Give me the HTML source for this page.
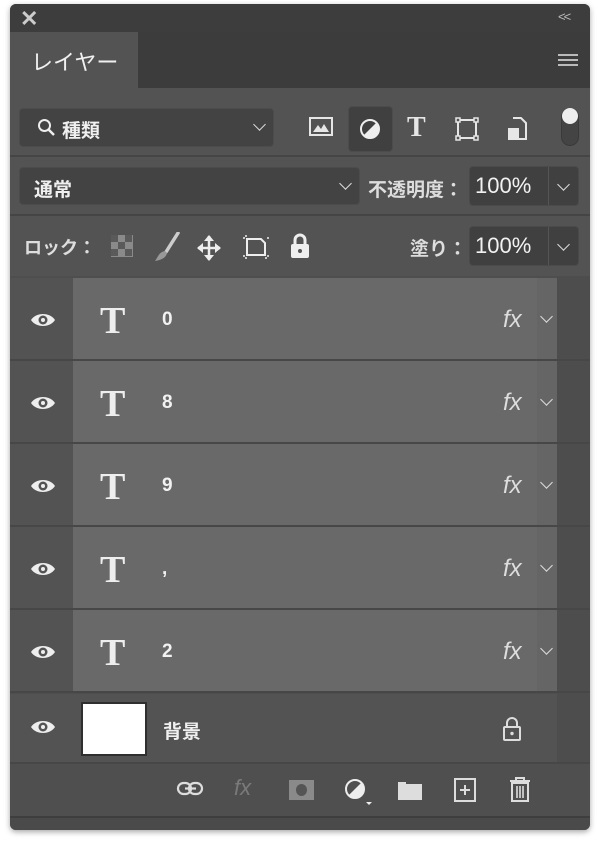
<!DOCTYPE html>
<html><head><meta charset="utf-8"><style>
*{margin:0;padding:0;box-sizing:border-box}
body{width:600px;height:845px;background:#fff;position:relative;overflow:hidden;font-family:"Liberation Sans","Noto Sans CJK JP",sans-serif;color:#e6e6e6}
.a{position:absolute}
.panel{left:10px;top:4px;width:580px;height:826px;background:#535353;border-radius:6px;overflow:hidden;box-shadow:0 2px 6px rgba(0,0,0,.35)}
.box{background:#434343;border:1px solid #4c4c4c;border-radius:4px}
.chev{width:9px;height:9px;border-right:1.8px solid #ddd;border-bottom:1.8px solid #ddd;transform:rotate(45deg)}
.row{left:0;width:580px;height:83px;border-bottom:2px solid #474747}
.row .l{position:absolute;left:0;top:0;width:63px;height:81px;background:#535353}
.row .c{position:absolute;left:63px;top:0;width:464px;height:81px;background:#696969}
.row .r{position:absolute;left:527px;top:0;width:20px;height:81px;background:#656565}
.txt{font-size:19px;font-weight:bold}
.T{font-family:'Liberation Serif',serif;font-size:38px;color:#eee;font-weight:bold}
</style></head><body>
<div class="a panel">
 <div class="a" style="left:0;top:0;width:580px;height:28px;background:#3d3d3d"></div>
 <div class="a" style="left:10px;top:2px;font-size:22px;font-weight:bold;color:#ccc">✕</div>
 <div class="a" style="left:548px;top:5px;font-size:13px;color:#bbb;letter-spacing:-2px">&lt;&lt;</div>
 <div class="a" style="left:0;top:28px;width:580px;height:56px;background:#3c3c3c"></div>
 <div class="a" style="left:0;top:28px;width:128px;height:57px;background:#535353"></div>
 <div class="a" style="left:21px;top:41px;font-size:22px;color:#f0f0f0">レイヤー</div>
 <div class="a" style="left:548px;top:50px;width:20px;height:12px;border-top:2px solid #bbb;border-bottom:2px solid #bbb"></div>
 <div class="a" style="left:548px;top:55px;width:20px;height:2px;background:#bbb"></div>
 <div class="a box" style="left:9px;top:104px;width:255px;height:39px"></div>
 <svg class="a" style="left:27px;top:114px" width="20" height="20"><circle cx="7.5" cy="7.5" r="5.5" fill="none" stroke="#eee" stroke-width="2"/><line x1="11.5" y1="11.5" x2="17" y2="17" stroke="#eee" stroke-width="2.5"/></svg>
 <div class="a txt" style="left:52px;top:112px;color:#f0f0f0">種類</div>
 <div class="a chev" style="left:245px;top:116px"></div>
 <svg class="a" style="left:299px;top:113px" width="24" height="20"><rect x="1" y="1" width="22" height="17" fill="none" stroke="#e6e6e6" stroke-width="2"/><path d="M4 15 L9 8 L12 12 L15 7 L20 15Z" fill="#e6e6e6"/></svg>
 <div class="a" style="left:338px;top:102px;width:45px;height:46px;background:#404040;border:1px solid #4c4c4c;border-radius:4px"></div>
 <svg class="a" style="left:349px;top:114px" width="22" height="22"><circle cx="11" cy="11" r="9" fill="none" stroke="#eee" stroke-width="2"/><path d="M17.4 4.6 A9 9 0 0 1 4.6 17.4Z" fill="#eee"/></svg>
 <div class="a" style="left:397px;top:108px;font-family:'Liberation Serif',serif;font-size:28px;font-weight:bold;color:#e6e6e6">T</div>
 <svg class="a" style="left:445px;top:113px" width="24" height="24"><rect x="3" y="3" width="18" height="18" fill="none" stroke="#e6e6e6" stroke-width="2"/><g fill="#535353" stroke="#e6e6e6" stroke-width="1.5"><rect x="1" y="1" width="4" height="4"/><rect x="19" y="1" width="4" height="4"/><rect x="1" y="19" width="4" height="4"/><rect x="19" y="19" width="4" height="4"/></g></svg>
 <svg class="a" style="left:496px;top:113px" width="22" height="24"><path d="M7 1 H15 L20 6 V22 H12" fill="none" stroke="#e6e6e6" stroke-width="2"/><rect x="2" y="11" width="11" height="12" fill="#e6e6e6"/></svg>
 <div class="a" style="left:551px;top:104px;width:18px;height:38px;border-radius:9px;background:#444;border:1px solid #3a3a3a"></div>
 <div class="a" style="left:552px;top:104px;width:16px;height:16px;border-radius:50%;background:#eee"></div>
 <div class="a" style="left:0;top:151px;width:580px;height:2px;background:#454545"></div>
 <div class="a box" style="left:9px;top:163px;width:341px;height:38px"></div>
 <div class="a txt" style="left:24px;top:171px;color:#f0f0f0">通常</div>
 <div class="a chev" style="left:331px;top:175px"></div>
 <div class="a txt" style="left:358px;top:171px;color:#ddd">不透明度：</div>
 <div class="a" style="left:459px;top:162px;width:110px;height:40px;background:#404040;border:1px solid #4a4a4a;border-radius:4px"></div>
 <div class="a" style="left:538px;top:163px;width:1px;height:38px;background:#555"></div>
 <div class="a" style="left:465px;top:169px;font-size:22px;color:#f2f2f2">100%</div>
 <div class="a chev" style="left:549px;top:176px"></div>
 <div class="a" style="left:0;top:210px;width:580px;height:2px;background:#454545"></div>
 <div class="a txt" style="left:14px;top:230px;font-size:18px;color:#ddd">ロック：</div>
 <svg class="a" style="left:101px;top:231px" width="22" height="22"><rect width="22" height="22" fill="#8a8a8a"/><g fill="#5a5a5a"><rect x="0" y="0" width="7" height="7"/><rect x="14" y="0" width="7" height="7"/><rect x="7" y="7" width="7" height="7"/><rect x="0" y="14" width="7" height="7"/><rect x="14" y="14" width="7" height="7"/></g></svg>
 <svg class="a" style="left:144px;top:228px" width="26" height="30"><path d="M24 1 L12 20" stroke="#ccc" stroke-width="3.5" stroke-linecap="round"/><path d="M11 19 C5 20 4 25 1 29 C7 28 12 26 13 21Z" fill="#999"/></svg>
 <svg class="a" style="left:187px;top:231px" width="24" height="26"><path d="M12 1 V25 M1 13 H23" stroke="#eee" stroke-width="2.5"/><path d="M12 0 L7 6 H17Z M12 26 L7 20 H17Z M0 13 L6 8 V18Z M24 13 L18 8 V18Z" fill="#eee"/></svg>
 <svg class="a" style="left:232px;top:230px" width="28" height="26"><path d="M5 5 H19 L23 9 V21 H5Z" fill="none" stroke="#eee" stroke-width="2"/><path d="M1 4 H3 M25 4 H27 M1 22 H3 M25 22 H27 M4 1 V3 M4 23 V25 M24 23 V25" stroke="#eee" stroke-width="1.5"/></svg>
 <svg class="a" style="left:279px;top:228px" width="22" height="28"><path d="M6 12 V8 A5 5 0 0 1 16 8 V12" fill="none" stroke="#eee" stroke-width="3"/><rect x="2" y="12" width="18" height="14" rx="2" fill="#eee"/><circle cx="11" cy="19" r="2" fill="#535353"/></svg>
 <div class="a txt" style="left:400px;top:230px;color:#ddd">塗り：</div>
 <div class="a" style="left:459px;top:222px;width:110px;height:40px;background:#404040;border:1px solid #4a4a4a;border-radius:4px"></div>
 <div class="a" style="left:538px;top:223px;width:1px;height:38px;background:#555"></div>
 <div class="a" style="left:465px;top:229px;font-size:22px;color:#f2f2f2">100%</div>
 <div class="a chev" style="left:549px;top:236px"></div>
 <div class="a" style="left:0;top:272px;width:580px;height:486px;background:#4e4e4e"></div>
 <div class="a" style="left:547px;top:272px;width:33px;height:486px;background:#4d4d4d"></div>
 <div class="a" style="left:0;top:690px;width:547px;height:68px;background:#535353"></div>
 <svg class="a" style="left:20px;top:714px" width="26" height="18"><path d="M1 9 C6 1 20 1 25 9 C20 17 6 17 1 9Z" fill="#eee"/><circle cx="13" cy="9" r="4.5" fill="#535353"/><circle cx="13" cy="9" r="2" fill="#eee"/></svg>
 <div class="a" style="left:71px;top:698px;width:66px;height:54px;background:#fff;border:2px solid #2f2f2f"></div>
 <div class="a txt" style="left:153px;top:713px;color:#f0f0f0">背景</div>
 <svg class="a" style="left:492px;top:712px" width="20" height="26"><path d="M5 11 V7 A5 5 0 0 1 15 7 V11" fill="none" stroke="#ddd" stroke-width="2"/><rect x="2" y="11" width="16" height="13" rx="1" fill="none" stroke="#ddd" stroke-width="2"/><circle cx="10" cy="17.5" r="1.7" fill="#ddd"/></svg>
 <div class="a" style="left:0;top:758px;width:580px;height:54px;background:#4f4f4f;border-top:2px solid #474747"></div>
 <svg class="a" style="left:166px;top:775px" width="30" height="20"><rect x="2" y="4" width="13" height="11" rx="5.5" fill="none" stroke="#ddd" stroke-width="2.2"/><rect x="13" y="4" width="13" height="11" rx="5.5" fill="none" stroke="#ddd" stroke-width="2.2"/><line x1="9" y1="9.5" x2="20" y2="9.5" stroke="#ddd" stroke-width="2.2"/></svg>
 <div class="a" style="left:224px;top:771px;font-size:22px;font-style:italic;color:#7a7a7a">fx</div>
 <div class="a" style="left:279px;top:776px;width:25px;height:20px;background:#8a8a8a"></div>
 <div class="a" style="left:286px;top:780px;width:11px;height:12px;border-radius:50%;background:#555"></div>
 <svg class="a" style="left:334px;top:774px" width="30" height="30"><circle cx="11" cy="11" r="9" fill="none" stroke="#eee" stroke-width="2"/><path d="M17.4 4.6 A9 9 0 0 1 4.6 17.4Z" fill="#eee"/><path d="M22 24 H28 L25 27Z" fill="#eee"/></svg>
 <svg class="a" style="left:387px;top:775px" width="26" height="22"><path d="M1 3 H9 V5 H25 V21 H1Z" fill="#ddd"/></svg>
 <svg class="a" style="left:444px;top:774px" width="22" height="24"><rect x="1" y="1" width="20" height="22" fill="none" stroke="#ddd" stroke-width="2"/><path d="M11 7 V17 M6 12 H16" stroke="#ddd" stroke-width="2"/></svg>
 <svg class="a" style="left:499px;top:772px" width="22" height="26"><path d="M1 5 H21 M7 5 V2 H15 V5" fill="none" stroke="#ddd" stroke-width="2"/><path d="M3 7 H19 V25 H3Z" fill="none" stroke="#ddd" stroke-width="2"/><path d="M8 10 V22 M11 10 V22 M14 10 V22" stroke="#ddd" stroke-width="1.6"/></svg>
 <div class="a" style="left:0;top:812px;width:580px;height:14px;background:#4a4a4a;border-top:2px solid #3e3e3e"></div>
</div>
<div class="a" style="left:10px;top:278px;width:0;height:0">
 <div class="a row" style="top:0"><div class="l"></div><div class="c"></div><div class="r"></div></div>
 <div class="a row" style="top:83px"><div class="l"></div><div class="c"></div><div class="r"></div></div>
 <div class="a row" style="top:166px"><div class="l"></div><div class="c"></div><div class="r"></div></div>
 <div class="a row" style="top:249px"><div class="l"></div><div class="c"></div><div class="r"></div></div>
 <div class="a row" style="top:332px"><div class="l"></div><div class="c"></div><div class="r"></div></div>
</div>
<div class="a" style="left:0;top:0">
 <div class="a" style="left:30px;top:311px"><svg width="26" height="18"><path d="M1 9 C6 1 20 1 25 9 C20 17 6 17 1 9Z" fill="#eee"/><circle cx="13" cy="9" r="4.5" fill="#535353"/><circle cx="13" cy="9" r="2" fill="#eee"/></svg></div>
 <div class="a" style="left:30px;top:394px"><svg width="26" height="18"><path d="M1 9 C6 1 20 1 25 9 C20 17 6 17 1 9Z" fill="#eee"/><circle cx="13" cy="9" r="4.5" fill="#535353"/><circle cx="13" cy="9" r="2" fill="#eee"/></svg></div>
 <div class="a" style="left:30px;top:477px"><svg width="26" height="18"><path d="M1 9 C6 1 20 1 25 9 C20 17 6 17 1 9Z" fill="#eee"/><circle cx="13" cy="9" r="4.5" fill="#535353"/><circle cx="13" cy="9" r="2" fill="#eee"/></svg></div>
 <div class="a" style="left:30px;top:560px"><svg width="26" height="18"><path d="M1 9 C6 1 20 1 25 9 C20 17 6 17 1 9Z" fill="#eee"/><circle cx="13" cy="9" r="4.5" fill="#535353"/><circle cx="13" cy="9" r="2" fill="#eee"/></svg></div>
 <div class="a" style="left:30px;top:643px"><svg width="26" height="18"><path d="M1 9 C6 1 20 1 25 9 C20 17 6 17 1 9Z" fill="#eee"/><circle cx="13" cy="9" r="4.5" fill="#535353"/><circle cx="13" cy="9" r="2" fill="#eee"/></svg></div>
 <div class="a T" style="left:100px;top:299px">T</div>
 <div class="a T" style="left:100px;top:382px">T</div>
 <div class="a T" style="left:100px;top:465px">T</div>
 <div class="a T" style="left:100px;top:548px">T</div>
 <div class="a T" style="left:100px;top:631px">T</div>
 <div class="a txt" style="left:162px;top:309px;color:#f2f2f2">0</div>
 <div class="a txt" style="left:162px;top:392px;color:#f2f2f2">8</div>
 <div class="a txt" style="left:162px;top:475px;color:#f2f2f2">9</div>
 <div class="a txt" style="left:162px;top:558px;color:#f2f2f2">,</div>
 <div class="a txt" style="left:162px;top:641px;color:#f2f2f2">2</div>
 <div class="a" style="left:503px;top:306px;font-size:24px;font-style:italic;color:#ddd">fx</div>
 <div class="a" style="left:503px;top:389px;font-size:24px;font-style:italic;color:#ddd">fx</div>
 <div class="a" style="left:503px;top:472px;font-size:24px;font-style:italic;color:#ddd">fx</div>
 <div class="a" style="left:503px;top:555px;font-size:24px;font-style:italic;color:#ddd">fx</div>
 <div class="a" style="left:503px;top:638px;font-size:24px;font-style:italic;color:#ddd">fx</div>
 <div class="a chev" style="left:542px;top:312px"></div>
 <div class="a chev" style="left:542px;top:395px"></div>
 <div class="a chev" style="left:542px;top:478px"></div>
 <div class="a chev" style="left:542px;top:561px"></div>
 <div class="a chev" style="left:542px;top:644px"></div>
</div>
</body></html>
